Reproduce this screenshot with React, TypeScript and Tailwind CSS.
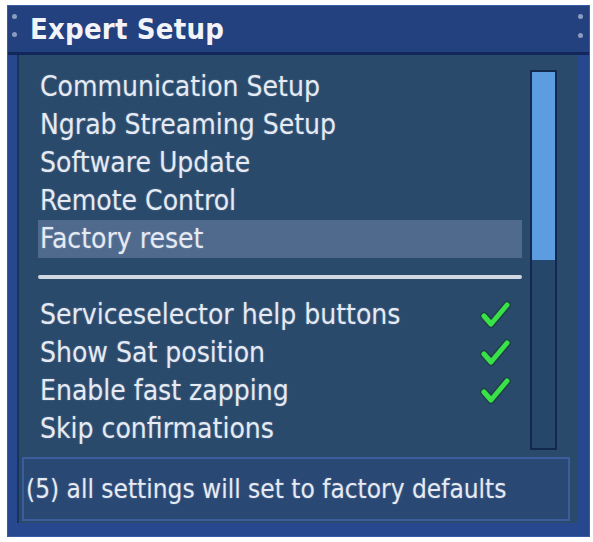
import React from "react";

const font = { fontFamily: '"DejaVu Sans Condensed", "DejaVu Sans", sans-serif' };

const topItems = [
  "Communication Setup",
  "Ngrab Streaming Setup",
  "Software Update",
  "Remote Control",
  "Factory reset",
];

const bottomItems = [
  { label: "Serviceselector help buttons", on: true },
  { label: "Show Sat position", on: true },
  { label: "Enable fast zapping", on: true },
  { label: "Skip confirmations", on: false },
];

function Check() {
  return (
    <svg width="34" height="30" viewBox="0 0 34 30">
      <path
        d="M6 16 L13 24 L29 5"
        fill="none"
        stroke="#0f3a1a"
        strokeWidth="8"
        strokeLinecap="round"
        strokeLinejoin="round"
        opacity="0.45"
      />
      <path
        d="M6 16 L13 24 L29 5"
        fill="none"
        stroke="#3ae24a"
        strokeWidth="5"
        strokeLinecap="round"
        strokeLinejoin="round"
      />
    </svg>
  );
}

function Dot() {
  return <div className="h-[5px] w-[5px] rounded-full bg-[#8a9cc0]" />;
}

export default function App() {
  return (
    <div className="h-[542px] w-[593px] bg-white pl-[7px] pt-[5px]" style={font}>
      <div className="flex h-[532px] w-[583px] flex-col border border-[#3a5ca6] bg-[#27488e]">
        {/* Title bar */}
        <div className="relative flex h-[46px] shrink-0 items-center bg-[#23407f] pl-[22px]">
          <div className="absolute left-[4px] top-[8px] flex flex-col gap-[13px]">
            <Dot />
            <Dot />
          </div>
          <div className="absolute right-[6px] top-[8px] flex flex-col gap-[14px]">
            <Dot />
            <Dot />
          </div>
          <span className="text-[29px] font-bold leading-none tracking-[0.2px] text-[#f2f4f8]">
            Expert Setup
          </span>
        </div>
        <div className="h-[3px] shrink-0 bg-[#13285a]" />

        {/* Body with side frame */}
        <div className="flex flex-1 pb-[13px] pl-[9px] pr-[12px]">
          <div className="relative flex flex-1 flex-col border-l-2 border-[#1a3358] bg-[#2a4a6c]">
            {/* List */}
            <div className="ml-[19px] mt-[13px] w-[484px] text-[28px] leading-none text-[#e6eaf2] [text-shadow:0_0_2px_rgba(200,215,240,0.35)]">
              {topItems.map((t) => (
                <div
                  key={t}
                  className={
                    t === "Factory reset"
                      ? "flex h-[38px] items-center bg-[#506a8e] px-[2px]"
                      : "flex h-[38px] items-center px-[2px]"
                  }
                >
                  {t}
                </div>
              ))}
              <div className="flex h-[38px] items-center">
                <div className="h-[4px] w-full rounded-full bg-[#d2d8e2]" />
              </div>
              {bottomItems.map((it) => (
                <div key={it.label} className="flex h-[38px] items-center justify-between pl-[2px] pr-[10px]">
                  <span>{it.label}</span>
                  {it.on && <Check />}
                </div>
              ))}
            </div>

            {/* Scrollbar */}
            <div className="absolute left-[511px] top-[15px] h-[380px] w-[27px] border-2 border-[#12284e] bg-[#27476a]">
              <div className="h-[188px] w-full bg-[#5c9ce0]" />
            </div>

            {/* Footer info box */}
            <div className="mb-[2px] ml-[3px] mt-auto flex h-[64px] w-[548px] items-center border-2 border-[#3b5d9c] bg-[#294874] pl-[2px] text-[26px] leading-none text-[#e6eaf2] [text-shadow:0_0_2px_rgba(200,215,240,0.35)]">
              (5) all settings will set to factory defaults
            </div>
          </div>
        </div>
      </div>
    </div>
  );
}
